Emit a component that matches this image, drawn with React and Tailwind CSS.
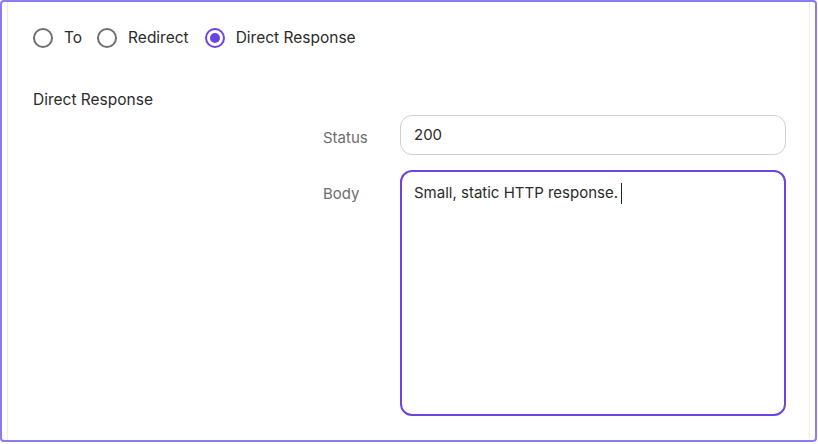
export default function App() {
  const font = { fontFamily: 'Inter, "Noto Sans", sans-serif' };
  return (
    <div className="w-[818px] h-[444px] bg-white" style={font}>
      <div className="w-[817px] h-[442px] border-2 border-[#8b7cf4] rounded-[4px] bg-white">
        <div className="h-full mx-[5px] border-x border-[#ececec] pl-[25px] pr-[23px] flex flex-col">
          <div className="flex items-center h-[20px] mt-[26px] text-[15.5px] text-[#2b2b2b]">
            <span className="w-[20px] h-[20px] rounded-full border-2 border-[#6f6f6f]" />
            <span className="ml-[11px]">To</span>
            <span className="ml-[15px] w-[20px] h-[20px] rounded-full border-2 border-[#6f6f6f]" />
            <span className="ml-[11px]">Redirect</span>
            <span className="ml-[16px] w-[20px] h-[20px] rounded-full border-2 border-[#6a45e2] flex items-center justify-center">
              <span className="w-[10px] h-[10px] rounded-full bg-[#6a45e2]" />
            </span>
            <span className="ml-[11px]">Direct Response</span>
          </div>
          <div className="mt-[42px] text-[15.5px] leading-[20px] text-[#2b2b2b]">Direct Response</div>
          <div className="mt-[5px] ml-[290px] flex flex-col gap-[15px]">
            <div className="flex items-center">
              <div className="w-[77px] text-[15px] text-[#6e6e6e] pt-[6px]">Status</div>
              <div className="flex-1 h-[40px] rounded-[12px] border border-[#cfcfcf] flex items-center px-[13px] text-[15px] text-[#2b2b2b]">
                200
              </div>
            </div>
            <div className="flex items-start">
              <div className="w-[77px] text-[15px] text-[#6e6e6e] pt-[13px]">Body</div>
              <div className="flex-1 h-[246px] rounded-[12px] border-2 border-[#6a45e2] px-[12px] pt-[10px] text-[15px] leading-[22px] text-[#2b2b2b]">
                Small, static HTTP response.
                <span className="inline-block align-middle ml-[3px] w-[1px] h-[21px] bg-[#222]" />
              </div>
            </div>
          </div>
        </div>
      </div>
    </div>
  );
}
